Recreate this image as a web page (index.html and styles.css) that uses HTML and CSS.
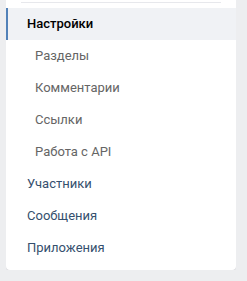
FILE: index.html
```html
<!DOCTYPE html>
<html lang="ru">
<head>
    <meta charset="UTF-8">
    <title>Настройки</title>
    <link rel="stylesheet" href="styles.css">
</head>
<body>
    <div class="menu">
        <div class="menu-sep"></div>
        <a class="menu-item selected">Настройки</a>
        <a class="menu-item sub">Разделы</a>
        <a class="menu-item sub">Комментарии</a>
        <a class="menu-item sub">Ссылки</a>
        <a class="menu-item sub">Работа с API</a>
        <a class="menu-item">Участники</a>
        <a class="menu-item">Сообщения</a>
        <a class="menu-item">Приложения</a>
    </div>
</body>
</html>
```

FILE: styles.css
```css
body {
    margin: 0;
    padding: 0 11px 0 6px;
    background: #edeef0;
    font-family: Roboto, "Open Sans", Arial, sans-serif;
    font-size: 13px;
}
.menu {
    background: #fff;
    border-radius: 0 0 4px 4px;
    box-shadow: 0 1px 0 0 #d7d8db;
    padding: 2px 0 6px;
}
.menu-sep {
    height: 1px;
    margin: 0 15px 5px;
    background: #e7e8ec;
}
.menu-item {
    display: block;
    height: 32px;
    line-height: 32px;
    padding-left: 21px;
    color: #35506e;
    cursor: pointer;
}
.menu-item.sub {
    padding-left: 29px;
    color: #656565;
}
.menu-item.selected {
    background: #f0f2f5;
    border-left: 2px solid #5181b8;
    padding-left: 19px;
    color: #000;
    font-weight: 500;
}
```
